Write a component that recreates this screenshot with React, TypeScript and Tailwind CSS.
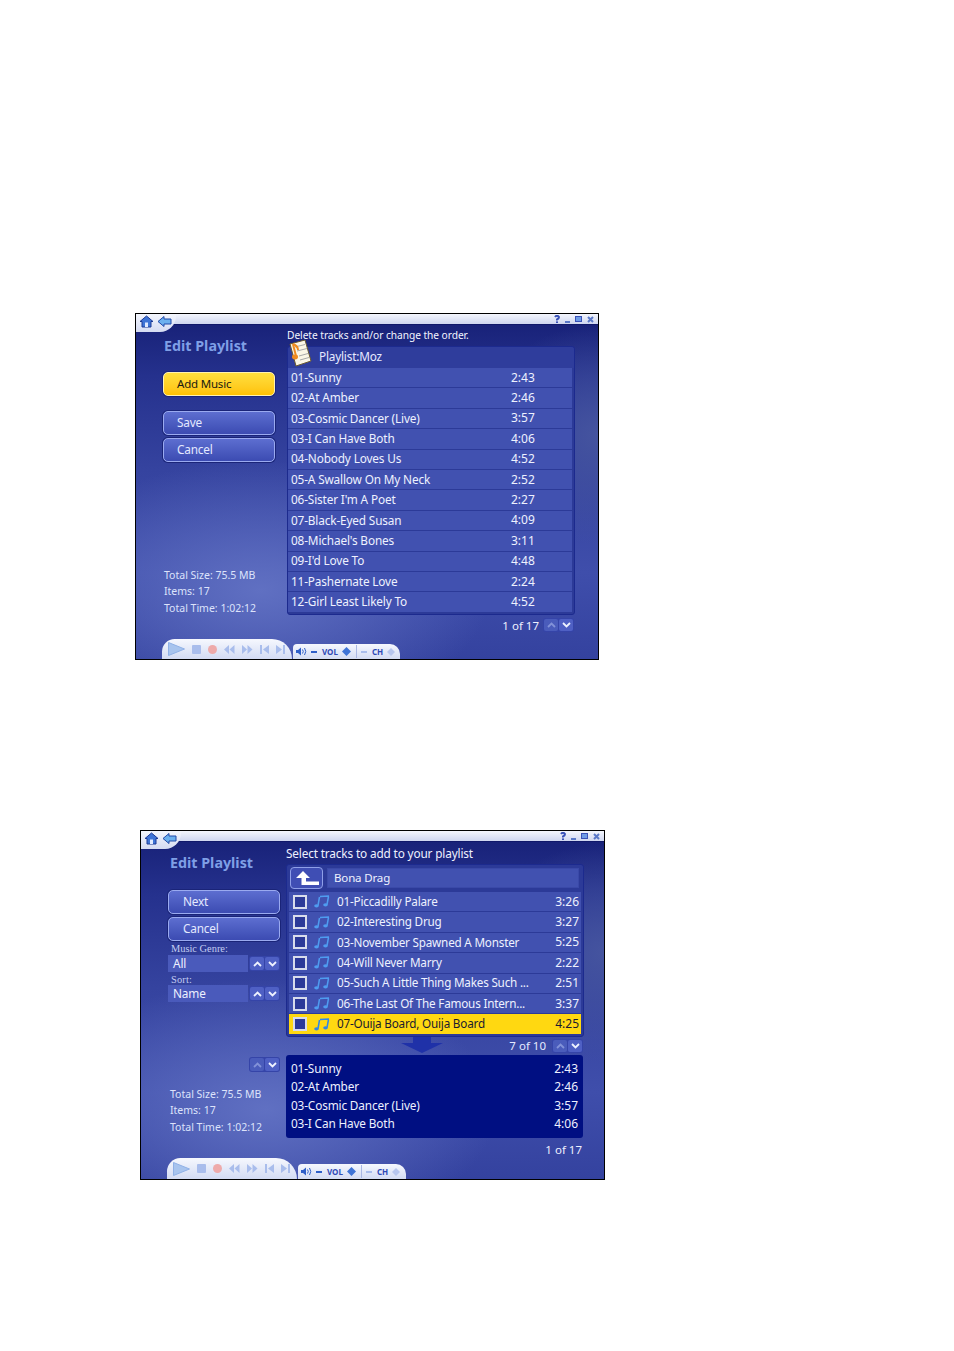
import React from "react";

const font = { fontFamily: '"Noto Sans", "Open Sans", sans-serif' };

function HomeIcon() {
  return (
    <svg width="15" height="13" viewBox="0 0 15 13">
      <path d="M7.5 1 L14 6.5 L12 6.5 L12 12 L3 12 L3 6.5 L1 6.5 Z" fill="#3f74d6" stroke="#1c3a96" strokeWidth="1" />
      <rect x="6" y="7.5" width="3" height="4.5" fill="#dfe9ff" />
    </svg>
  );
}
function BackIcon() {
  return (
    <svg width="15" height="13" viewBox="0 0 15 13">
      <path d="M1 6.5 L7 1.5 L7 4 L14 4 L14 9 L7 9 L7 11.5 Z" fill="#6cb0ee" stroke="#2148a8" strokeWidth="1" />
    </svg>
  );
}
function WinControls() {
  return (
    <div className="flex items-center gap-[5px] pr-[4px]">
      <svg width="6" height="8" viewBox="0 0 6 8">
        <path d="M1 2 Q3 -0.5 5 2 Q5 3.5 3 4.5 L3 5.5" fill="none" stroke="#3a52b8" strokeWidth="2" />
        <rect x="2" y="6.4" width="2" height="1.6" fill="#3a52b8" />
      </svg>
      <div className="mt-[5px] h-[2px] w-[5px] bg-[#5a78c8]" />
      <div className="h-[6px] w-[7px] border border-[#3a52b8] bg-[#6f9be6]" />
      <svg width="7" height="7" viewBox="0 0 7 7">
        <path d="M1 1 L6 6 M6 1 L1 6" stroke="#5a78c8" strokeWidth="2" />
      </svg>
    </div>
  );
}

function TitleBar() {
  return (
    <div className="relative flex h-[11px] shrink-0 justify-end border-b border-[#10186a] bg-gradient-to-b from-[#f4f6fd] to-[#cfd6f0]">
      <div className="absolute left-0 top-0 flex h-[18px] w-[40px] items-start gap-[3px] rounded-br-[16px] bg-gradient-to-b from-[#f4f6fd] to-[#d5dbf2] pl-[3px] pt-[1px]">
        <HomeIcon />
        <BackIcon />
      </div>
      <WinControls />
    </div>
  );
}

function Player({ tall }: { tall?: boolean }) {
  const c = "#a9bdec";
  return (
    <div className="flex shrink-0 items-end pl-[26px]">
      <div className={`flex w-[130px] items-center gap-[7px] rounded-t-[14px] rounded-tr-[22px] bg-gradient-to-b from-[#f6f8fe] to-[#d3dbf3] pl-[6px] ${tall ? "h-[21px]" : "h-[20px]"}`}>
        <svg width="17" height="14" viewBox="0 0 17 14"><path d="M0.5 0.5 L16.5 7 L0.5 13.5 Z" fill="#a8c4ee" stroke="#8fb0e6" /></svg>
        <div className="h-[9px] w-[9px] rounded-[1px] bg-[#a9bdec]" />
        <div className="h-[9px] w-[9px] rounded-full bg-[#eeaaaa]" />
        <svg width="11" height="9" viewBox="0 0 11 9"><path d="M5 0 L0 4.5 L5 9 Z M10.5 0 L5.5 4.5 L10.5 9 Z" fill={c} /></svg>
        <svg width="11" height="9" viewBox="0 0 11 9"><path d="M0 0 L5 4.5 L0 9 Z M5.5 0 L10.5 4.5 L5.5 9 Z" fill={c} /></svg>
        <svg width="9" height="9" viewBox="0 0 9 9"><path d="M0 0 H2 V9 H0 Z M9 0 L3 4.5 L9 9 Z" fill={c} /></svg>
        <svg width="9" height="9" viewBox="0 0 9 9"><path d="M9 0 H7 V9 H9 Z M0 0 L6 4.5 L0 9 Z" fill={c} /></svg>
      </div>
      <div className={`ml-[1px] flex h-[15px] items-center rounded-tl-[4px] rounded-tr-[10px] bg-gradient-to-b from-[#f6f8fe] to-[#d3dbf3] pl-[3px] text-[8px] font-bold text-[#2f49b5] ${tall ? "w-[108px]" : "w-[107px]"}`}>
        <svg width="11" height="9" viewBox="0 0 11 9"><path d="M0 3 H2 L5 0.5 V8.5 L2 6 H0 Z" fill="#2f5fc8" /><path d="M6.5 2.5 Q8 4.5 6.5 6.5 M8.5 1 Q11 4.5 8.5 8" stroke="#2f5fc8" fill="none" /></svg>
        <div className="ml-[4px] h-[2px] w-[6px] bg-[#2f5fc8]" />
        <span className="ml-[5px] leading-none">VOL</span>
        <svg className="ml-[4px]" width="9" height="9" viewBox="0 0 9 9"><path d="M4.5 0 L9 4.5 L4.5 9 L0 4.5 Z" fill="#3f74d6" /></svg>
        <div className="ml-[5px] h-[13px] w-px bg-[#aab8e4]" />
        <div className="ml-[4px] h-[2px] w-[6px] bg-[#a9bdec]" />
        <span className="ml-[5px] leading-none">CH</span>
        <svg className="ml-[4px]" width="8" height="8" viewBox="0 0 9 9"><path d="M4.5 0 L9 4.5 L4.5 9 L0 4.5 Z" fill="#b7c6ee" /></svg>
      </div>
    </div>
  );
}

function Btn({ label, yellow, pad }: { label: string; yellow?: boolean; pad?: string }) {
  return yellow ? (
    <div className="flex h-[24px] items-center rounded-[5px] border-[1.5px] border-[#fff2b0] bg-gradient-to-b from-[#ffdf3c] to-[#ffc200] pb-px pl-[13px] text-[11.5px] tracking-[-0.2px] text-[#1a1a10] shadow-[0_0_0_1px_#1a2478]">
      {label}
    </div>
  ) : (
    <div className={`flex h-[24px] items-center rounded-[5px] border-[1.5px] border-[#9aaaf0] bg-gradient-to-b from-[#5d6ed0] to-[#3c4bb2] pb-px text-[11.8px] tracking-[-0.2px] text-[#e4e9ff] shadow-[0_0_0_1px_#1a2478] ${pad ?? "pl-[13px]"}`}>
      {label}
    </div>
  );
}

function Chev({ down, dim }: { down?: boolean; dim?: boolean }) {
  return (
    <div className={`flex h-full w-[14px] items-center justify-center rounded-[2px] ${dim ? "bg-[#4a5cbb]" : "bg-[#4f60c4]"}`}>
      <svg width="9" height="6" viewBox="0 0 9 6">
        <path d={down ? "M1 1 L4.5 4.5 L8 1" : "M1 5 L4.5 1.5 L8 5"} fill="none" stroke={dim ? "#8292d8" : "#eef2ff"} strokeWidth="1.8" />
      </svg>
    </div>
  );
}
function Arrows({ dimUp, cls }: { dimUp?: boolean; cls: string }) {
  return (
    <div className={`flex gap-px rounded-[3px] bg-[#3544a8] p-[1px] ${cls}`}>
      <Chev dim={dimUp} />
      <Chev down />
    </div>
  );
}

function Stats({ cls }: { cls: string }) {
  return (
    <div className={`text-[10.5px] leading-[16.5px] text-[#dde3fb] ${cls}`}>
      <div>Total Size: 75.5 MB</div>
      <div>Items: 17</div>
      <div>Total Time: 1:02:12</div>
    </div>
  );
}

function DocIcon() {
  return (
    <svg className="absolute left-[-2px] top-[-8px]" width="28" height="28" viewBox="0 0 26 28">
      <path d="M3 5 L18 1 L24 22 L9 27 Z" fill="#fbf6e6" stroke="#6b5a30" strokeWidth="1" />
      <path d="M8 8 L18 5.5 M10 12 L20 9.5 M12 17 L21 14.5 M13 21 L22 18.5" stroke="#a8a8a8" strokeWidth="1" />
      <path d="M6 5 L9 17" stroke="#ee8a20" strokeWidth="2" />
      <path d="M6 5 Q11 7 11 11" stroke="#ee8a20" strokeWidth="2" fill="none" />
      <ellipse cx="8" cy="18" rx="3" ry="2.4" fill="#ee8a20" />
    </svg>
  );
}

function Note({ yellow }: { yellow?: boolean }) {
  const c = yellow ? "#2f86e8" : "#4f9cf0";
  return (
    <svg width="16" height="13" viewBox="0 0 16 13">
      <path d="M6 1.5 L15 1 M5.5 2 L4 10.5 M14.5 1.5 L13 9.5" stroke={c} strokeWidth="1.5" fill="none" />
      <ellipse cx="2.5" cy="10.8" rx="2.3" ry="1.6" fill={c} />
      <ellipse cx="11.5" cy="9.8" rx="2.3" ry="1.6" fill={c} />
    </svg>
  );
}

const playlist: [string, string][] = [
  ["01-Sunny", "2:43"],
  ["02-At Amber", "2:46"],
  ["03-Cosmic Dancer (Live)", "3:57"],
  ["03-I Can Have Both", "4:06"],
  ["04-Nobody Loves Us", "4:52"],
  ["05-A Swallow On My Neck", "2:52"],
  ["06-Sister I'm A Poet", "2:27"],
  ["07-Black-Eyed Susan", "4:09"],
  ["08-Michael's Bones", "3:11"],
  ["09-I'd Love To", "4:48"],
  ["11-Pashernate Love", "2:24"],
  ["12-Girl Least Likely To", "4:52"],
];

const tracks: [string, string][] = [
  ["01-Piccadilly Palare", "3:26"],
  ["02-Interesting Drug", "3:27"],
  ["03-November Spawned A Monster", "5:25"],
  ["04-Will Never Marry", "2:22"],
  ["05-Such A Little Thing Makes Such ...", "2:51"],
  ["06-The Last Of The Famous Intern...", "3:37"],
  ["07-Ouija Board, Ouija Board", "4:25"],
];

const windowBg =
  "bg-[radial-gradient(ellipse_230px_130px_at_27%_80%,#6070c2,transparent),radial-gradient(ellipse_120px_110px_at_100%_35%,#45549f,transparent),linear-gradient(180deg,#161f75_0%,#25318d_18%,#35439f_45%,#3f4eab_75%,#34429f_100%)]";

function FirstWindow() {
  return (
    <div className={`ml-[135px] mt-[313px] flex h-[347px] w-[464px] flex-col overflow-hidden border border-black ${windowBg}`}>
      <TitleBar />
      <div className="flex min-h-0 flex-1">
        <div className="flex w-[151px] shrink-0 flex-col pl-[27px] pr-[12px]">
          <div className="mt-[11px] pl-px text-[14.3px] font-bold leading-[20px] text-[#7f9fe6]">Edit Playlist</div>
          <div className="mt-[16px]"><Btn label="Add Music" yellow /></div>
          <div className="mt-[15px]"><Btn label="Save" /></div>
          <div className="mt-[3px]"><Btn label="Cancel" /></div>
          <Stats cls="mt-auto mb-[23px] pl-px" />
        </div>
        <div className="flex flex-1 flex-col pr-[23px]">
          <div className="mt-[3px] text-[10.2px] leading-[14px] tracking-[-0.05px] text-[#f2f4ff]">Delete tracks and/or change the order.</div>
          <div className="mt-[4px] rounded-[3px] border border-[#1c2a8e] bg-[#2c3a98] pb-[2px]">
            <div className="relative flex h-[21px] items-center rounded-t-[3px] bg-[#2f3d9c] pb-[2px] pl-[31px] text-[11.8px] tracking-[-0.2px] text-[#e6eaff]">
              <DocIcon />
              Playlist:Moz
            </div>
            <div className="flex flex-col gap-px pr-[2px]">
              {playlist.map(([n, d]) => (
                <div key={n} className="flex h-[19.4px] items-center bg-[#4151b0] pl-[3px] text-[11.8px] tracking-[-0.15px] text-[#eef1ff]">
                  <span className="w-[220px]">{n}</span>
                  <span className="text-[12px] tracking-normal">{d}</span>
                </div>
              ))}
            </div>
          </div>
          <div className="mt-[3px] flex h-[15px] items-center justify-end text-[11.5px] text-[#eef1ff]">
            <span className="mr-[4px]">1 of 17</span>
            <Arrows dimUp cls="h-[14px] mr-[1px]" />
          </div>
        </div>
      </div>
      <Player />
    </div>
  );
}

function SecondWindow() {
  return (
    <div className={`ml-[140px] mt-[170px] flex h-[350px] w-[465px] flex-col overflow-hidden border border-black ${windowBg}`}>
      <TitleBar />
      <div className="flex min-h-0 flex-1">
        <div className="flex w-[145px] shrink-0 flex-col pl-[27px]">
          <div className="mt-[11px] pl-[2px] text-[14.3px] font-bold leading-[20px] text-[#7f9fe6]">Edit Playlist</div>
          <div className="mt-[17px] w-[112px]"><Btn label="Next" pad="pl-[14px]" /></div>
          <div className="mt-[3px] w-[112px]"><Btn label="Cancel" pad="pl-[14px]" /></div>
          <div className="mt-[2px] pl-[3px] text-[10.4px] leading-[11px] text-[#c3cdf2] [font-family:'Liberation_Serif',serif]">Music Genre:</div>
          <div className="mt-px flex w-[112px] items-center justify-between">
            <div className="flex h-[17px] w-[80px] items-center bg-[#4a5abb] pl-[5px] text-[11.8px] tracking-[-0.15px] text-[#eef1ff]">All</div>
            <Arrows cls="h-[15px]" />
          </div>
          <div className="mt-[2px] pl-[3px] text-[10.4px] leading-[11px] tracking-[0.2px] text-[#c3cdf2] [font-family:'Liberation_Serif',serif]">Sort:</div>
          <div className="flex w-[112px] items-center justify-between">
            <div className="flex h-[17px] w-[80px] items-center bg-[#4a5abb] pl-[5px] text-[11.8px] tracking-[-0.15px] text-[#eef1ff]">Name</div>
            <Arrows cls="h-[15px]" />
          </div>
          <div className="mt-[55px] flex w-[112px] justify-end">
            <Arrows dimUp cls="h-[15px]" />
          </div>
          <Stats cls="mt-auto mb-[23px] pl-[2px]" />
        </div>
        <div className="flex flex-1 flex-col pr-[21px]">
          <div className="mt-[3px] text-[11.8px] leading-[16px] tracking-[-0.15px] text-[#eef1ff]">Select tracks to add to your playlist</div>
          <div className="mt-[3px] w-[298px] rounded-[3px] border border-[#1c2a8e] bg-[#2c3a98] px-[2px] pb-[2px]">
            <div className="flex h-[27px] items-center gap-[4px] pb-px pl-[1px]">
              <div className="flex h-[22px] w-[33px] items-center justify-center rounded-[4px] border border-[#8f9fe8] bg-[#3f4eb4]">
                <svg width="24" height="14" viewBox="0 0 24 14">
                  <path d="M8 0 L15 7 L11 7 L11 10.5 L24 10.5 L24 14 L6.5 14 L6.5 7 L1 7 Z" fill="#fff" />
                </svg>
              </div>
              <div className="flex h-[20px] w-[252px] items-center border border-[#3a49a8] bg-[#4151b0] pb-px pl-[6px] text-[11.5px] tracking-[-0.15px] text-[#eef1ff]">Bona Drag</div>
            </div>
            <div className="flex flex-col gap-px">
              {tracks.map(([n, d], i) => {
                const y = i === 6;
                return (
                  <div key={n} className={`flex h-[19.4px] items-center pl-[4px] pr-[2px] text-[11.7px] tracking-[-0.2px] ${y ? "bg-[#ffd811] text-[#1a1a30]" : "bg-[#4151b0] text-[#eef1ff]"}`}>
                    <div className="h-[14px] w-[14px] shrink-0 border-2 border-[#d8dcec] bg-[#2c3a98]" />
                    <div className="ml-[7px] shrink-0"><Note yellow={y} /></div>
                    <span className="ml-[7px] flex-1 whitespace-nowrap">{n}</span>
                    <span className="text-[12px] tracking-normal">{d}</span>
                  </div>
                );
              })}
            </div>
          </div>
          <div className="flex h-[20px] w-[297px] items-end pb-[2px]">
            <svg className="ml-[115px]" width="42" height="16" viewBox="0 0 42 16">
              <path d="M12 0 H30 V6 H42 L21 16 L0 6 H12 Z" fill="#1f31a8" />
            </svg>
            <span className="ml-auto mr-[6px] text-[11.5px] leading-[15px] text-[#e4e9ff]">7 of 10</span>
            <Arrows dimUp cls="h-[14px]" />
          </div>
          <div className="w-[297px] rounded-[3px] bg-[#000f82] py-[5px] pl-[5px] pr-[5px]">
            {playlist.slice(0, 4).map(([n, d]) => (
              <div key={n} className="flex h-[18.3px] items-center justify-between text-[11.8px] tracking-[-0.15px] text-[#eef1ff]">
                <span>{n}</span>
                <span className="text-[12px] tracking-normal">{d}</span>
              </div>
            ))}
          </div>
          <div className="mt-[4px] w-[296px] text-right text-[11.5px] leading-[16px] text-[#eef1ff]">1 of 17</div>
        </div>
      </div>
      <Player tall />
    </div>
  );
}

export default function App() {
  return (
    <div className="h-[1351px] w-[954px] overflow-hidden bg-white" style={font}>
      <div className="flow-root">
        <FirstWindow />
        <SecondWindow />
      </div>
    </div>
  );
}
